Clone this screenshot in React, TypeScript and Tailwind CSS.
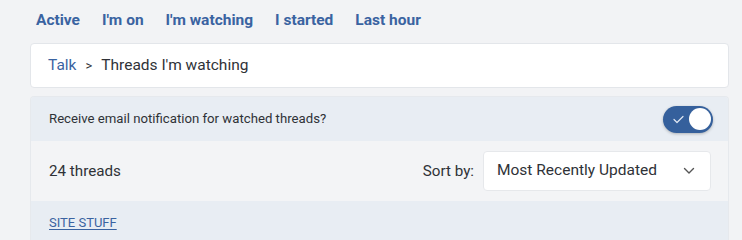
import React from 'react';

const tabs = ["Active", "I'm on", "I'm watching", "I started", "Last hour"];

function Toggle({ on, onChange }: { on: boolean; onChange: (v: boolean) => void }) {
  return (
    <button
      onClick={() => onChange(!on)}
      className={`relative flex h-[27px] w-[50px] items-center rounded-full shadow-[0_1px_3px_rgba(0,0,0,0.25)] ${on ? 'bg-[#35609c]' : 'bg-gray-300'}`}
    >
      {on && (
        <svg className="absolute left-[10px] top-[9px]" width="11" height="9" viewBox="0 0 11 9" fill="none">
          <path d="M1 4.5 L4 7.5 L10 1.5" stroke="#dfe7f2" strokeWidth="1.2" strokeLinecap="round" strokeLinejoin="round" />
        </svg>
      )}
      <span className={`absolute top-[2.5px] h-[22px] w-[22px] rounded-full bg-white ${on ? 'left-[25.5px]' : 'left-[2.5px]'}`} />
    </button>
  );
}

function App() {
  const [notify, setNotify] = React.useState<boolean>(true);

  return (
    <div className="min-h-[240px] bg-[#f2f3f5] pl-[30px] pr-[13px] text-[#2f3237]" style={{ fontFamily: 'Roboto, "Liberation Sans", sans-serif' }}>
      <div className="flex h-[40px] items-center gap-[22px] pl-[6px] pt-[1px]">
        {tabs.map(t => (
          <a key={t} className="text-[15.5px] font-bold text-[#3a63a1]">{t}</a>
        ))}
      </div>

      <div className="mt-[3px] flex h-[45px] items-center rounded-[4px] border border-[#e3e6ea] bg-white pl-[17px] text-[15.5px]">
        <a className="text-[#3a63a1]">Talk</a>
        <span className="mx-[9px] text-[13px]">&gt;</span>
        <span>Threads I'm watching</span>
      </div>

      <div className="mt-[8px] overflow-hidden rounded-t-[4px] border-x border-t border-[#e6e9ed]">
        <div className="flex h-[44px] items-center justify-between bg-[#e8edf3] pl-[18px] pr-[15px] text-[13.2px]">
          <span>Receive email notification for watched threads?</span>
          <Toggle on={notify} onChange={setNotify} />
        </div>

        <div className="flex h-[60px] items-center justify-between bg-[#f3f4f6] pl-[18px] pr-[17px] text-[15.2px]">
          <span>24 threads</span>
          <div className="flex items-center gap-[9px]">
            <span>Sort by:</span>
            <div className="flex h-[40px] w-[228px] items-center justify-between rounded-[4px] border border-[#e6e8eb] bg-white pl-[13px] pr-[15px] text-[15.5px]">
              <span>Most Recently Updated</span>
              <svg width="12" height="8" viewBox="0 0 12 8" fill="none">
                <path d="M1.5 1.5 L6 6 L10.5 1.5" stroke="#555" strokeWidth="1.4" strokeLinecap="round" strokeLinejoin="round" />
              </svg>
            </div>
          </div>
        </div>

        <div className="h-[40px] bg-[#e8edf3] pl-[18px] pt-[9px]">
          <a className="text-[13px] uppercase text-[#3a63a1] underline underline-offset-2">Site Stuff</a>
        </div>
      </div>
    </div>
  );
}

export default App;
